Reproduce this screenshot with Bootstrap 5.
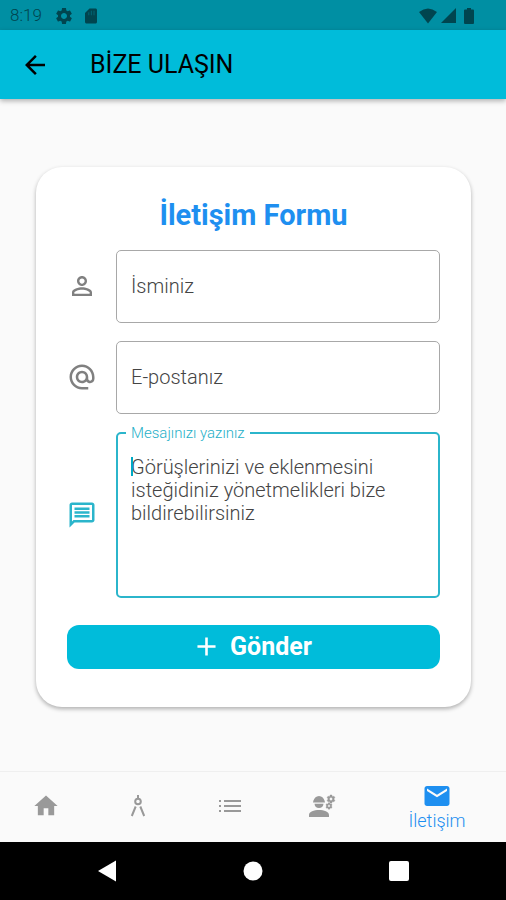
<!DOCTYPE html>
<html lang="tr">
<head>
<meta charset="utf-8">
<meta name="viewport" content="width=device-width, initial-scale=1">
<title>Bize Ulaşın</title>
<link rel="stylesheet" href="https://cdn.jsdelivr.net/npm/bootstrap@5.3.0/dist/css/bootstrap.min.css">
<style>
  :root { --teal: #00bcda; --blue: #1e8ff0; }
  body { font-family: Roboto, "Noto Sans", sans-serif; background: #fafafa; color: #000; }
  svg { display: block; fill: currentColor; }
  .status-bar { height: 30px; background: #008fa3; color: #00454f; font-size: 17px; font-weight: 300; padding: 2px 32px 0 10px; }
  .app-header { height: 69px; background: var(--teal); box-shadow: 0 2px 5px rgba(0,0,0,.3); padding: 0 20px; gap: 40px; }
  .app-header h1 { font-size: 25px; line-height: 32px; font-weight: 400; }
  .back-btn { color: #000; }
  .form-area { padding: 3px 35px 0 36px; }
  .contact-card { border-radius: 26px; padding: 28px 31px 38px; box-shadow: 0 2px 4px rgba(0,0,0,.3); }
  .contact-card h2 { font-size: 29px; line-height: 40px; font-weight: 700; color: var(--blue); margin-bottom: 15px; }
  .field-stack { gap: 18px; }
  .field-row { gap: 19px; color: #808080; }
  .field-row.active { color: #2bb5cb; }
  .field-box { border: 1px solid #a8a8a8; border-radius: 5px; font-size: 20px; line-height: 23px; font-weight: 300; padding: 0 14px; color: #333; background: #fff; }
  .field-box::placeholder { color: #444; opacity: 1; }
  .field-box:focus { border-color: #2bb5cb; box-shadow: none; }
  input.field-box { height: 73px; }
  textarea.field-box { height: 166px; border: 2px solid #2bb5cb; padding: 22px 13px; resize: none; display: block; }
  .float-label { left: 10px; top: -8px; padding: 0 5px; font-size: 15px; line-height: 18px; font-weight: 300; background: #fff; color: #1fb0c8; }
  .caret { left: 15px; top: 25px; width: 2px; height: 19px; background: #00a9c4; }
  .send-btn { height: 44px; border-radius: 12px; background: var(--teal); color: #fff; font-size: 25px; line-height: 30px; font-weight: 700; margin-top: 9px; padding-right: 4px; }
  .send-btn:hover { background: #00a9c4; color: #fff; }
  .tab-bar { height: 71px; border-top: 1px solid #efefef; color: #999; padding-bottom: 2px; }
  .tab-bar a { flex: 2 1 0; color: inherit; text-decoration: none; }
  .tab-bar a.current { flex-grow: 3; color: var(--blue); font-size: 18px; line-height: 20px; font-weight: 300; }
  .system-bar { height: 58px; background: #000; }
  .system-bar button { width: 146px; color: #fff; }
</style>
<script src="https://cdn.jsdelivr.net/npm/bootstrap@5.3.0/dist/js/bootstrap.bundle.min.js"></script>
</head>
<body class="d-flex flex-column min-vh-100">
<svg width="0" height="0" class="position-absolute" aria-hidden="true">
  <symbol id="gear" viewBox="0 0 24 24"><path d="M19.14 12.94c.04-.3.06-.61.06-.94 0-.32-.02-.64-.07-.94l2.03-1.58c.18-.14.23-.41.12-.61l-1.92-3.32c-.12-.22-.37-.29-.59-.22l-2.39.96c-.5-.38-1.03-.7-1.62-.94l-.36-2.54c-.04-.24-.24-.41-.48-.41h-3.84c-.24 0-.43.17-.47.41l-.36 2.54c-.59.24-1.13.57-1.62.94l-2.39-.96c-.22-.08-.47 0-.59.22L2.74 8.87c-.12.21-.08.47.12.61l2.03 1.58c-.05.3-.09.63-.09.94s.02.64.07.94l-2.03 1.58c-.18.14-.23.41-.12.61l1.92 3.32c.12.22.37.29.59.22l2.39-.96c.5.38 1.03.7 1.62.94l.36 2.54c.05.24.24.41.48.41h3.84c.24 0 .44-.17.47-.41l.36-2.54c.59-.24 1.13-.56 1.62-.94l2.39.96c.22.08.47 0 .59-.22l1.92-3.32c.12-.22.07-.47-.12-.61l-2.01-1.58zM12 15.6c-1.98 0-3.6-1.62-3.6-3.6s1.62-3.6 3.6-3.6 3.6 1.62 3.6 3.6-1.62 3.6-3.6 3.6z"/></symbol>
</svg>

<div class="status-bar d-flex align-items-center justify-content-between">
  <div class="d-flex align-items-center">
    <span class="me-2">8:19</span>
    <svg class="ms-1 me-2" width="20" height="20"><use href="#gear"/></svg>
    <svg width="18" height="18" viewBox="0 0 24 24"><path d="M18 2h-8L4 8v12c0 1.100.9 2 2 2h12c1.100 0 2-.9 2-2V4c0-1.100-.9-2-2-2z"/><path d="M9 7v4M12.500 5v6M16 5v6" stroke="#008fa3" stroke-opacity=".4" stroke-width="1.500"/></svg>
  </div>
  <div class="d-flex align-items-center gap-1">
    <svg width="18" height="16" viewBox="0 0 18 16"><path d="M0 4Q9-3 18 4L9 15.500z"/></svg>
    <svg width="15" height="16" viewBox="0 0 15 16"><path d="M15 0v15H0z"/></svg>
    <svg class="ms-1" width="10" height="16" viewBox="0 0 10 16"><path d="M3 0h4v1.500h2q1 0 1 1V15q0 1-1 1H1q-1 0-1-1V2.500q0-1 1-1h2z"/></svg>
  </div>
</div>

<header class="app-header d-flex align-items-center">
  <button class="back-btn btn p-0 border-0" type="button" aria-label="Geri">
    <svg width="30" height="30" viewBox="0 0 24 24"><path d="M20 11H7.830l5.590-5.590L12 4l-8 8 8 8 1.410-1.410L7.830 13H20v-2z"/></svg>
  </button>
  <h1 class="m-0">BİZE ULAŞIN</h1>
</header>

<main class="form-area flex-grow-1 d-flex flex-column justify-content-center">
  <form class="contact-card bg-white d-flex flex-column">
    <h2 class="text-center">İletişim Formu</h2>
    <div class="field-stack d-flex flex-column">
      <div class="field-row d-flex align-items-center">
        <svg class="flex-shrink-0" width="30" height="30" viewBox="0 0 24 24"><path d="M12 5.900c1.160 0 2.100.94 2.100 2.100s-.94 2.100-2.100 2.100S9.900 9.160 9.900 8s.94-2.100 2.100-2.100m0 9c2.970 0 6.100 1.460 6.100 2.100v1.100H5.900V17c0-.64 3.130-2.100 6.100-2.100M12 4C9.790 4 8 5.790 8 8s1.790 4 4 4 4-1.790 4-4-1.790-4-4-4zm0 9c-2.670 0-8 1.340-8 4v3h16v-3c0-2.660-5.330-4-8-4z"/></svg>
        <input class="field-box form-control" type="text" placeholder="İsminiz" aria-label="İsminiz">
      </div>
      <div class="field-row d-flex align-items-center">
        <svg class="flex-shrink-0" width="30" height="30" viewBox="0 0 24 24"><path d="M12 2C6.480 2 2 6.480 2 12s4.480 10 10 10h5v-2h-5c-4.340 0-8-3.660-8-8s3.660-8 8-8 8 3.660 8 8v1.430c0 .79-.71 1.570-1.500 1.570s-1.500-.78-1.500-1.570V12c0-2.760-2.240-5-5-5s-5 2.240-5 5 2.240 5 5 5c1.380 0 2.640-.56 3.540-1.470.65.89 1.770 1.470 2.960 1.470 1.970 0 3.500-1.600 3.500-3.570V12c0-5.520-4.480-10-10-10zm0 13c-1.660 0-3-1.340-3-3s1.340-3 3-3 3 1.340 3 3-1.340 3-3 3z"/></svg>
        <input class="field-box form-control" type="email" placeholder="E-postanız" aria-label="E-postanız">
      </div>
      <div class="field-row active d-flex align-items-center">
        <svg class="flex-shrink-0" width="30" height="30" viewBox="0 0 24 24"><path d="M4 4h16v12H5.170L4 17.170V4m0-2c-1.100 0-1.990.9-1.990 2L2 22l4-4h14c1.100 0 2-.9 2-2V4c0-1.100-.9-2-2-2H4zm2 10h12v2H6v-2zm0-3h12v2H6V9zm0-3h12v2H6V6z"/></svg>
        <div class="position-relative flex-grow-1">
          <textarea id="message" class="field-box form-control" placeholder="Görüşlerinizi ve eklenmesini isteğidiniz yönetmelikleri bize bildirebilirsiniz"></textarea>
          <label for="message" class="float-label position-absolute">Mesajınızı yazınız</label>
          <span class="caret position-absolute"></span>
        </div>
      </div>
      <button class="send-btn btn border-0 py-0 ps-0 d-flex align-items-center justify-content-center gap-2" type="submit">
        <svg width="31" height="31" viewBox="0 0 24 24"><path d="M19 13h-6v6h-2v-6H5v-2h6V5h2v6h6v2z"/></svg>
        Gönder
      </button>
    </div>
  </form>
</main>

<nav class="tab-bar d-flex">
  <a href="#" class="d-flex align-items-center justify-content-center" aria-label="Ana sayfa">
    <svg width="28" height="28" viewBox="0 0 24 24"><path d="M10 20v-6h4v6h5v-8h3L12 3 2 12h3v8z"/></svg>
  </a>
  <a href="#" class="d-flex align-items-center justify-content-center" aria-label="Çizim">
    <svg width="16" height="24" viewBox="0 0 16 24"><g fill="none" stroke="currentColor" stroke-width="2"><circle cx="8" cy="7.500" r="2.800"/><path d="M8 1v3M5.700 12.500L1.800 22M10.300 12.500L14.200 22"/></g></svg>
  </a>
  <a href="#" class="d-flex align-items-center justify-content-center" aria-label="Liste">
    <svg width="24" height="16" viewBox="0 0 24 16"><path d="M1 2h2v2H1zM6 2h17v2H6zM1 7h2v2H1zM6 7h17v2H6zM1 12h2v2H1zM6 12h17v2H6z"/></svg>
  </a>
  <a href="#" class="d-flex align-items-center justify-content-center" aria-label="Mühendislik">
    <svg width="28" height="24" viewBox="0 0 28 24"><path d="M1 23v-2C1 17.500 6 16 11 16s10 1.500 10 5v2zM5 8.500C5.300 5.500 7 3.300 9 2.500q2-.8 4 0c2 .8 3.700 3 4 6zM6.500 9.700h9c-.3 3-2 4.300-4.500 4.300s-4.200-1.300-4.500-4.300z"/><use href="#gear" x="18" y="0" width="10" height="10" stroke="currentColor"/><use href="#gear" x="17" y="8" width="8" height="8" stroke="currentColor"/></svg>
  </a>
  <a href="#" class="current d-flex flex-column align-items-center justify-content-center" aria-current="page">
    <svg width="30" height="30" viewBox="0 0 24 24"><path d="M20 4H4c-1.100 0-1.990.9-1.990 2L2 18c0 1.100.9 2 2 2h16c1.100 0 2-.9 2-2V6c0-1.100-.9-2-2-2zm0 4l-8 5-8-5V6l8 5 8-5v2z"/></svg>
    İletişim
  </a>
</nav>

<div class="system-bar d-flex align-items-center justify-content-center">
  <button class="btn border-0 p-0 d-flex justify-content-center" type="button" aria-label="Geri git"><svg width="20" height="22" viewBox="0 0 20 22"><path d="M1 11L19 .5v21z"/></svg></button>
  <button class="btn border-0 p-0 d-flex justify-content-center" type="button" aria-label="Ana ekran"><svg width="20" height="20" viewBox="0 0 20 20"><circle cx="10" cy="10" r="9.500"/></svg></button>
  <button class="btn border-0 p-0 d-flex justify-content-center" type="button" aria-label="Son uygulamalar"><svg width="20" height="20" viewBox="0 0 20 20"><rect width="20" height="20" rx="2"/></svg></button>
</div>
</body>
</html>
